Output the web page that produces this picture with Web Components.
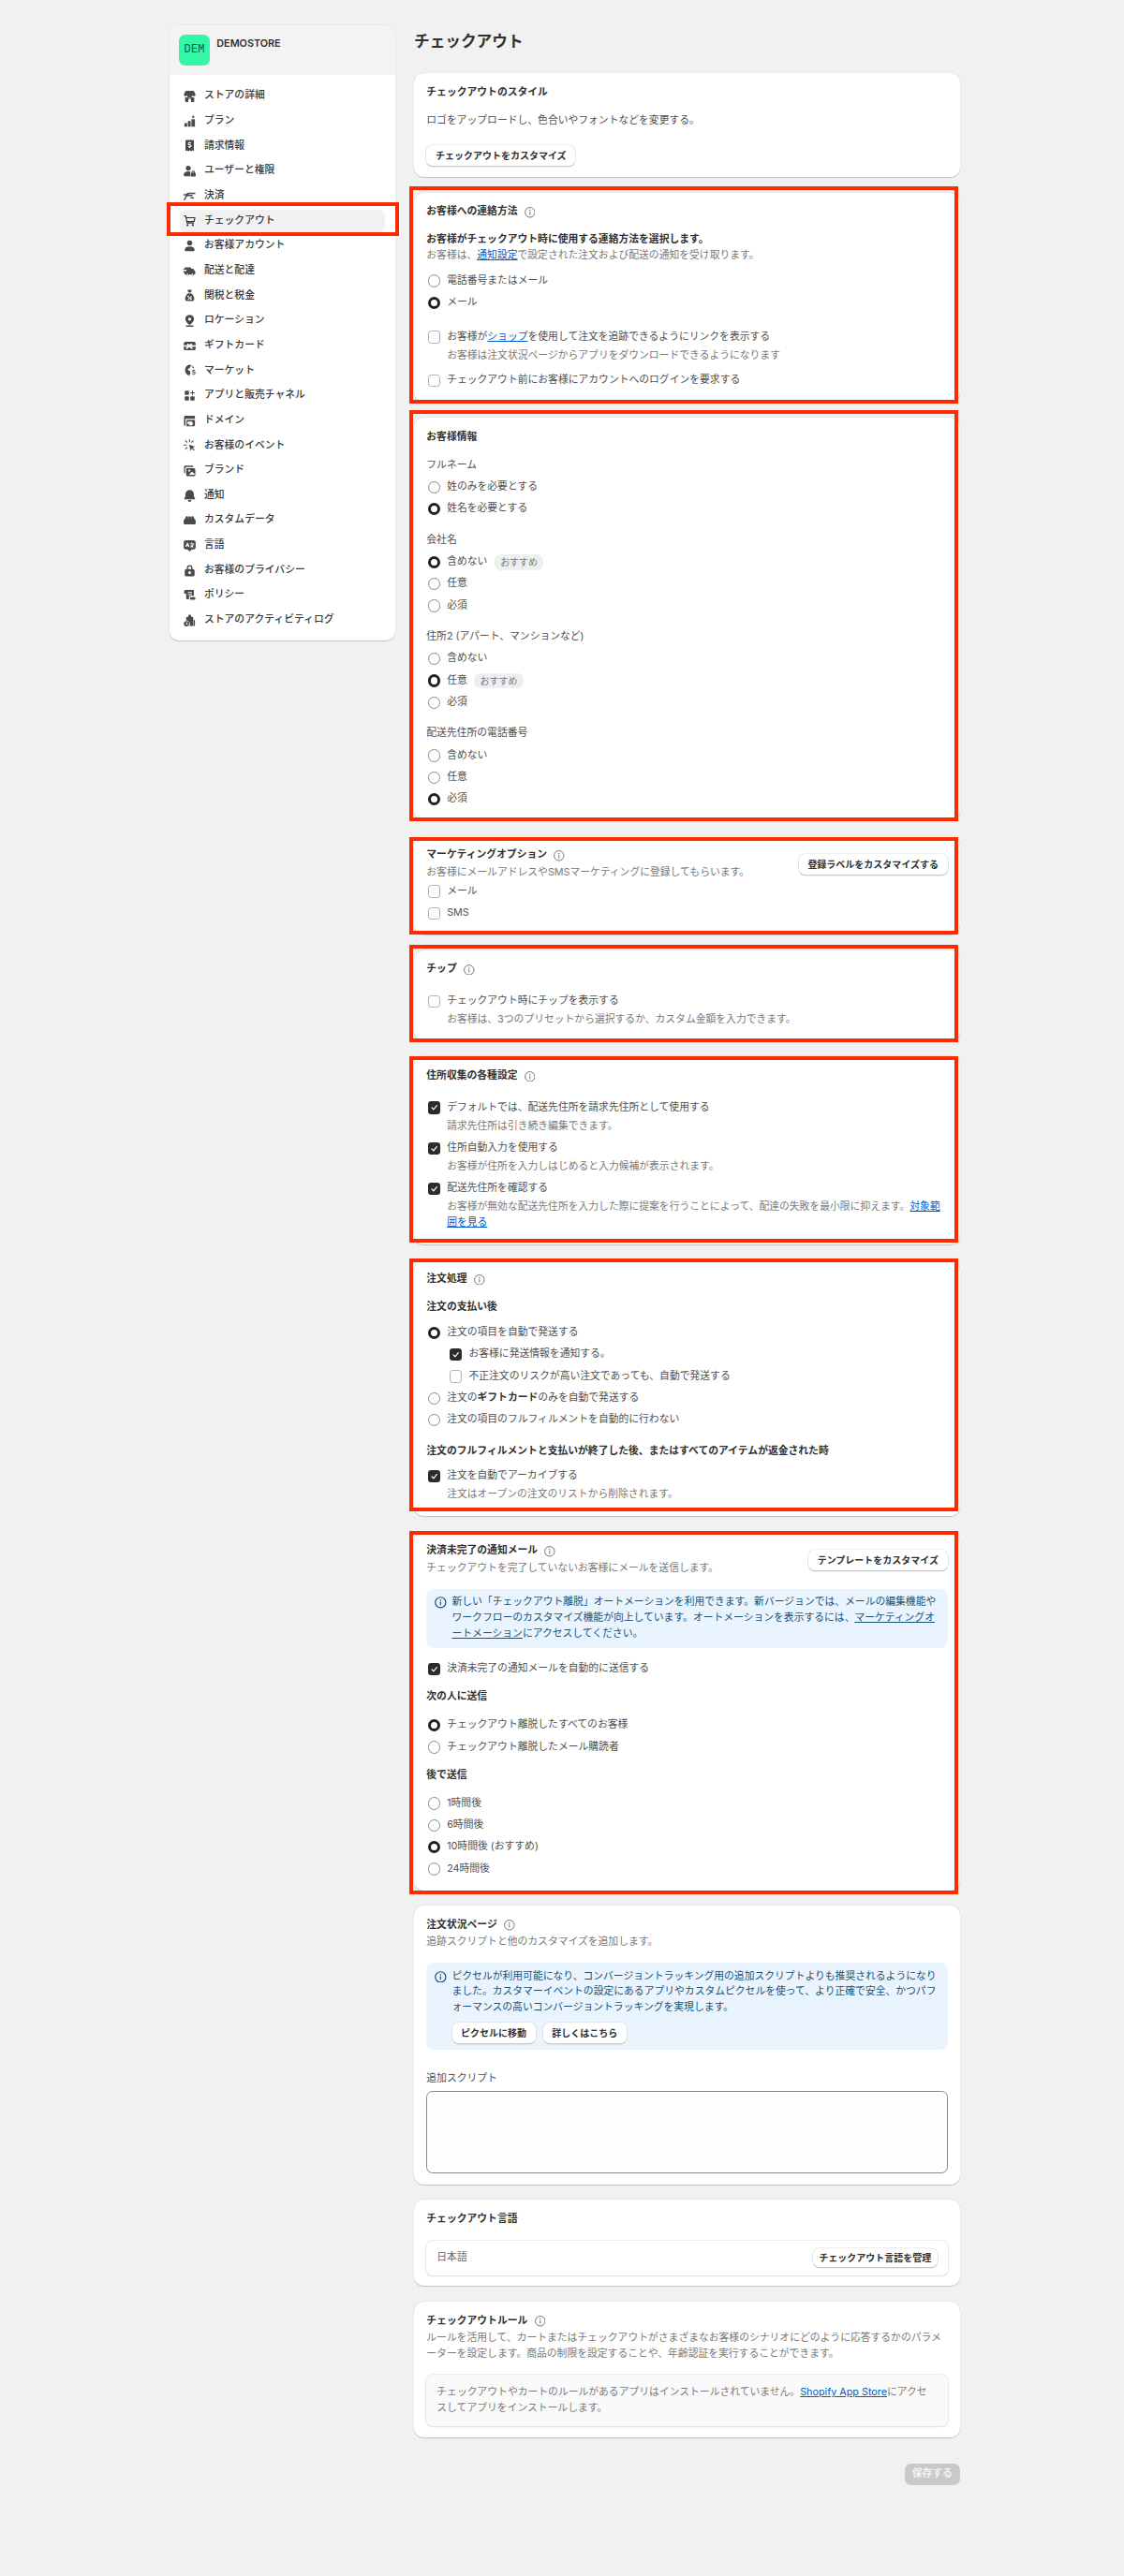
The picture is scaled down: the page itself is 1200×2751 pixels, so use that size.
<!DOCTYPE html>
<html lang="ja">
<head>
<meta charset="utf-8">
<title>チェックアウト</title>
<style>
html,body{margin:0;padding:0;background:#f1f1f1}
body{font-family:Inter,"Noto Sans CJK JP",sans-serif;font-size:10.8px;line-height:16.67px;color:#303030;overflow:hidden}
a{color:#005bd3;text-decoration:underline}
.g2{margin-top:1.7px}.g3{margin-top:3.33px}.g7{margin-top:6.67px}.g10{margin-top:10px}.g13{margin-top:13.33px}.g14{margin-top:14px}.g17{margin-top:16.67px}.g20{margin-top:20px}.g23{margin-top:23.3px}
</style>
</head>
<body>
<s-app>
  <s-sidebar slot="side">
    <s-nav icon="store">ストアの詳細</s-nav>
    <s-nav icon="plan">プラン</s-nav>
    <s-nav icon="bill">請求情報</s-nav>
    <s-nav icon="users">ユーザーと権限</s-nav>
    <s-nav icon="pay">決済</s-nav>
    <s-nav icon="cart" selected>チェックアウト</s-nav>
    <s-nav icon="person">お客様アカウント</s-nav>
    <s-nav icon="truck">配送と配達</s-nav>
    <s-nav icon="bag">関税と税金</s-nav>
    <s-nav icon="pin">ロケーション</s-nav>
    <s-nav icon="gift">ギフトカード</s-nav>
    <s-nav icon="globe">マーケット</s-nav>
    <s-nav icon="apps">アプリと販売チャネル</s-nav>
    <s-nav icon="domain">ドメイン</s-nav>
    <s-nav icon="click">お客様のイベント</s-nav>
    <s-nav icon="brand">ブランド</s-nav>
    <s-nav icon="bell">通知</s-nav>
    <s-nav icon="data">カスタムデータ</s-nav>
    <s-nav icon="lang">言語</s-nav>
    <s-nav icon="lock">お客様のプライバシー</s-nav>
    <s-nav icon="policy">ポリシー</s-nav>
    <s-nav icon="log">ストアのアクティビティログ</s-nav>
  </s-sidebar>

  <s-page heading="チェックアウト">
    <s-card style="padding-bottom:11.8px">
      <s-text kind="title">チェックアウトのスタイル</s-text>
      <s-text kind="label" class="g13">ロゴをアップロードし、色合いやフォントなどを変更する。</s-text>
      <s-btn style="margin-top:17.7px">チェックアウトをカスタマイズ</s-btn>
    </s-card>

    <s-card red style="--rt:7px;--rb:1.2px">
      <s-text kind="title" info>お客様への連絡方法</s-text>
      <s-text kind="strong" class="g13">お客様がチェックアウト時に使用する連絡方法を選択します。</s-text>
      <s-text kind="sub">お客様は、<a>通知設定</a>で設定された注文および配送の通知を受け取ります。</s-text>
      <s-radio class="g10">電話番号またはメール</s-radio>
      <s-radio class="g7" checked>メール</s-radio>
      <s-check class="g20">お客様が<a>ショップ</a>を使用して注文を追跡できるようにリンクを表示する<span slot="desc">お客様は注文状況ページからアプリをダウンロードできるようになります</span></s-check>
      <s-check class="g10">チェックアウト前にお客様にアカウントへのログインを要求する</s-check>
    </s-card>

    <s-card red style="--rt:8.2px;--rb:1px">
      <s-text kind="title">お客様情報</s-text>
      <s-text kind="label" class="g13">フルネーム</s-text>
      <s-radio class="g7">姓のみを必要とする</s-radio>
      <s-radio class="g7" checked>姓名を必要とする</s-radio>
      <s-text kind="label" class="g17">会社名</s-text>
      <s-radio class="g7" checked>含めない<s-badge slot="after">おすすめ</s-badge></s-radio>
      <s-radio class="g7">任意</s-radio>
      <s-radio class="g7">必須</s-radio>
      <s-text kind="label" class="g17">住所2 (アパート、マンションなど)</s-text>
      <s-radio class="g7">含めない</s-radio>
      <s-radio class="g7" checked>任意<s-badge slot="after">おすすめ</s-badge></s-radio>
      <s-radio class="g7">必須</s-radio>
      <s-text kind="label" class="g17">配送先住所の電話番号</s-text>
      <s-radio class="g7">含めない</s-radio>
      <s-radio class="g7">任意</s-radio>
      <s-radio class="g7" checked>必須</s-radio>
    </s-card>

    <s-card red style="--rt:-.9px;--rb:-.3px">
      <s-head>
        <s-text kind="title" info>マーケティングオプション</s-text>
        <s-text kind="sub" class="g2">お客様にメールアドレスやSMSマーケティングに登録してもらいます。</s-text>
        <s-btn slot="action">登録ラベルをカスタマイズする</s-btn>
      </s-head>
      <s-check class="g3">メール</s-check>
      <s-check class="g7">SMS</s-check>
    </s-card>

    <s-card red style="--rt:6px;--rb:.8px">
      <s-text kind="title" info>チップ</s-text>
      <s-check style="margin-top:17px">チェックアウト時にチップを表示する<span slot="desc">お客様は、3つのプリセットから選択するか、カスタム金額を入力できます。</span></s-check>
    </s-card>

    <s-card red style="--rt:.9px;--rb:-2px">
      <s-text kind="title" info>住所収集の各種設定</s-text>
      <s-check style="margin-top:17px" checked>デフォルトでは、配送先住所を請求先住所として使用する<span slot="desc">請求先住所は引き続き編集できます。</span></s-check>
      <s-check class="g7" checked>住所自動入力を使用する<span slot="desc">お客様が住所を入力しはじめると入力候補が表示されます。</span></s-check>
      <s-check class="g7" checked>配送先住所を確認する<span slot="desc">お客様が無効な配送先住所を入力した際に提案を行うことによって、配達の失敗を最小限に抑えます。<a>対象範囲を見る</a></span></s-check>
    </s-card>

    <s-card red style="--rt:1.4px;--rb:-5px">
      <s-text kind="title" info>注文処理</s-text>
      <s-text kind="strong" class="g13">注文の支払い後</s-text>
      <s-radio class="g10" checked>注文の項目を自動で発送する</s-radio>
      <s-check class="g7" style="margin-left:23.33px" checked>お客様に発送情報を通知する。</s-check>
      <s-check class="g7" style="margin-left:23.33px">不正注文のリスクが高い注文であっても、自動で発送する</s-check>
      <s-radio class="g7">注文の<b>ギフトカード</b>のみを自動で発送する</s-radio>
      <s-radio class="g7">注文の項目のフルフィルメントを自動的に行わない</s-radio>
      <s-text kind="strong" class="g17">注文のフルフィルメントと支払いが終了した後、またはすべてのアイテムが返金された時</s-text>
      <s-check class="g10" checked>注文を自動でアーカイブする<span slot="desc">注文はオープンの注文のリストから削除されます。</span></s-check>
    </s-card>

    <s-card red style="--rt:.7px;--rb:4.9px">
      <s-head>
        <s-text kind="title" info>決済未完了の通知メール</s-text>
        <s-text kind="sub" class="g2">チェックアウトを完了していないお客様にメールを送信します。</s-text>
        <s-btn slot="action">テンプレートをカスタマイズ</s-btn>
      </s-head>
      <s-banner class="g13">新しい「チェックアウト離脱」オートメーションを利用できます。新バージョンでは、メールの編集機能やワークフローのカスタマイズ機能が向上しています。オートメーションを表示するには、<a style="color:inherit">マーケティングオートメーション</a>にアクセスしてください。</s-banner>
      <s-check class="g14" checked>決済未完了の通知メールを自動的に送信する</s-check>
      <s-text kind="strong" class="g13">次の人に送信</s-text>
      <s-radio class="g13" checked>チェックアウト離脱したすべてのお客様</s-radio>
      <s-radio class="g7">チェックアウト離脱したメール購読者</s-radio>
      <s-text kind="strong" class="g13">後で送信</s-text>
      <s-radio class="g13">1時間後</s-radio>
      <s-radio class="g7">6時間後</s-radio>
      <s-radio class="g7" checked>10時間後 (おすすめ)</s-radio>
      <s-radio class="g7">24時間後</s-radio>
    </s-card>

    <s-card style="padding-bottom:11.7px">
      <s-text kind="title" info>注文状況ページ</s-text>
      <s-text kind="sub" class="g2">追跡スクリプトと他のカスタマイズを追加します。</s-text>
      <s-banner class="g13">ピクセルが利用可能になり、コンバージョントラッキング用の追加スクリプトよりも推奨されるようになりました。カスタマーイベントの設定にあるアプリやカスタムピクセルを使って、より正確で安全、かつパフォーマンスの高いコンバージョントラッキングを実現します。<s-btn slot="actions">ピクセルに移動</s-btn><s-btn slot="actions">詳しくはこちら</s-btn></s-banner>
      <s-text kind="label" class="g23">追加スクリプト</s-text>
      <s-area style="margin-top:3.7px"></s-area>
    </s-card>

    <s-card style="padding-bottom:11.7px">
      <s-text kind="title">チェックアウト言語</s-text>
      <s-box class="g14" row>日本語<s-btn slot="action" slim>チェックアウト言語を管理</s-btn></s-box>
    </s-card>

    <s-card style="padding-bottom:11.7px">
      <s-text kind="title" info>チェックアウトルール</s-text>
      <s-text kind="sub" class="g2">ルールを活用して、カートまたはチェックアウトがさまざまなお客様のシナリオにどのように応答するかのパラメーターを設定します。商品の制限を設定することや、年齢認証を実行することができます。</s-text>
      <s-box class="g14" muted>チェックアウトやカートのルールがあるアプリはインストールされていません。<a>Shopify App Store</a>にアクセスしてアプリをインストールします。</s-box>
    </s-card>

    <s-save>保存する</s-save>
  </s-page>
</s-app>

<script>
const ICONS={
store:`<path fill-rule="evenodd" d="M5.5 2.5h9a2 2 0 0 1 1.8 1.1L18.4 8a2.6 2.6 0 0 1-4.9 1 3.2 3.2 0 0 1-7 0 2.6 2.6 0 0 1-4.9-1l2.1-4.4a2 2 0 0 1 1.8-1.1zM3.5 12h13v5.5a1 1 0 0 1-1 1h-11a1 1 0 0 1-1-1V12zm6.5 1.5a2 2 0 0 0-2 2v3h4v-3a2 2 0 0 0-2-2z"/>`,
plan:`<path d="M2.5 13.5a1 1 0 0 1 1-1h3v5h-4v-4zM7.5 10.5a1 1 0 0 1 1-1h3v8h-4v-7zM12.5 8a1 1 0 0 1 1-1h3a1 1 0 0 1 1 1v9.5h-5V8z"/><circle cx="15" cy="3.5" r="1.6"/>`,
bill:`<path fill-rule="evenodd" d="M5.5 2h9A1.5 1.5 0 0 1 16 3.500V18l-2-1.200L12 18l-2-1.200L8 18l-2-1.200L4 18V3.500A1.500 1.500 0 0 1 5.500 2zM10 4.500a.8.800 0 0 0-.8.800 2.300 2.300 0 0 0-1.700 2.200c0 1.600 1.400 2 2.500 2.300.8.200 1 .4 1 .7 0 .4-.4.600-1 .6-.6 0-1.300-.2-1.800-.6l-.8 1.200c.5.400 1 .6 1.800.8a.8.800 0 0 0 1.600 0 2.300 2.300 0 0 0 1.700-2.100c0-1.700-1.400-2.100-2.500-2.400-.8-.2-1-.4-1-.7s.4-.5.9-.5 1.100.2 1.500.5l.8-1.200a4 4 0 0 0-1.400-.7.800.800 0 0 0-.8-.8z"/>`,
users:`<circle cx="8" cy="6" r="3.500"/><path d="M1.500 15.500c0-3 2.800-4.800 6.500-4.800 1 0 1.900.1 2.700.4v6.400H3a1.500 1.500 0 0 1-1.500-1.500v-.5z"/><path fill-rule="evenodd" d="M15 9.500a2.500 2.500 0 0 1 2.500 2.500v.5h.2a.8.800 0 0 1 .8.800v3.900a.8.800 0 0 1-.8.800h-5.400a.8.800 0 0 1-.8-.8v-3.900a.8.800 0 0 1 .8-.8h.2V12A2.500 2.500 0 0 1 15 9.500zm0 1.500a1 1 0 0 0-1 1v.5h2V12a1 1 0 0 0-1-1z"/>`,
pay:`<path d="M5 6.500C7 5 9 4.800 11 5h7v2h-7.500C9 7 8 7.500 7.500 8H14v2H8c-2 0-3 1.500-3.500 4l-2 2-1.500-1 2-2c.300-2 1-3.300 2-4H1.500V7H5z"/><path d="M11 11.500h5v1.800h-5z"/>`,
cart:`<g fill="none" stroke="#303030" stroke-width="1.500" stroke-linecap="round" stroke-linejoin="round"><path d="M2.500 3.500h1.200a1 1 0 0 1 1 .8l1.500 9.200h9.300"/><path d="M5 6h12.500l-1.300 5.500H6"/></g><circle cx="7" cy="16.500" r="1.400" fill="#303030"/><circle cx="14.500" cy="16.500" r="1.400" fill="#303030"/>`,
person:`<circle cx="10" cy="6" r="3.700"/><path d="M3 15.500c0-3 3-4.500 7-4.500s7 1.500 7 4.500v.5a1.500 1.500 0 0 1-1.500 1.500h-11A1.500 1.500 0 0 1 3 16v-.5z"/>`,
truck:`<path fill-rule="evenodd" d="M4.500 4.500h6.500a1 1 0 0 1 1 1v1h2.500a1 1 0 0 1 .9.500l2.400 3.500c.1.200.2.400.2.600v2.400a1 1 0 0 1-1 1h-.6a2.500 2.500 0 0 1-4.800 0H9.400a2.500 2.500 0 0 1-4.800 0H2.500v-3H1v-1.500h4.500V8H1V6.500h2.500a1 1 0 0 1 1-2zM7 13.500a1.200 1.200 0 1 0 0 2.400 1.200 1.200 0 0 0 0-2.400zm7 0a1.200 1.200 0 1 0 0 2.400 1.200 1.200 0 0 0 0-2.400z"/>`,
bag:`<path fill-rule="evenodd" d="M7 2h6l-1 3.500H8L7 2zM8 7h4c2.500 1.500 4.500 4.500 4.500 7.500 0 2.300-1.500 3.500-3.500 3.500H7c-2 0-3.500-1.200-3.500-3.500C3.500 11.500 5.500 8.500 8 7zm4.200 3.500-5 5 1 1 5-5-1-1zM8 10.300a1.200 1.200 0 1 0 0 2.400 1.200 1.200 0 0 0 0-2.400zm4 3.500a1.200 1.200 0 1 0 0 2.400 1.200 1.200 0 0 0 0-2.400z"/>`,
pin:`<path fill-rule="evenodd" d="M10 1.500a6.200 6.200 0 0 1 6.200 6.200c0 2.900-2.300 5.200-5.200 8h-2c-2.900-2.800-5.200-5.100-5.200-8A6.200 6.200 0 0 1 10 1.500zm0 4a2.200 2.200 0 1 0 0 4.400 2.200 2.200 0 0 0 0-4.400z"/><rect x="4.500" y="16.500" width="11" height="2" rx="1"/>`,
gift:`<path fill-rule="evenodd" d="M4 4h12a2.500 2.500 0 0 1 2.500 2.500v7A2.500 2.500 0 0 1 16 16H4a2.500 2.500 0 0 1-2.500-2.500v-7A2.500 2.500 0 0 1 4 4zm3.500 2.500c-1.300 0-1.800 1.500-1 2.500H1.500v2h5l-2 2 1.500 1.500 3-3 1 .1 3 2.900 1.500-1.500-2-2h6V9h-5c.8-1 .3-2.500-1-2.500-1.200 0-2 .8-2.500 1.800-.5-1-1.300-1.800-2.500-1.800z"/>`,
globe:`<path d="M9.500 2A8 8 0 0 1 13 2.800l-2 1.700-1 2.500-2.500.5L8 10l2.500 1 .5 3-1.500 3.500A8 8 0 0 1 9.500 2z"/><path d="M15.300 9.500v.7c1 .2 1.800.8 2 1.500l-1.200.5c-.2-.4-.7-.8-1.400-.8-.6 0-1 .3-1 .6 0 .4.500.6 1.200.8 1 .2 2.500.6 2.500 2 0 1-.8 1.700-2 1.900v.8h-1.300v-.8c-1-.2-1.900-.8-2.200-1.700l1.200-.5c.3.600.9 1 1.700 1 .7 0 1.200-.3 1.200-.7 0-.4-.5-.6-1.200-.8-1-.2-2.400-.6-2.400-2 0-1 .8-1.600 1.800-1.800v-.7z" transform="translate(1 -1)"/><path d="M13.500 3.500a8 8 0 0 1 3 3l-1.500.5-1.500-1.500z"/>`,
apps:`<rect x="3" y="3" width="6" height="6" rx="1.200"/><rect x="3" y="11" width="6" height="6" rx="1.200"/><rect x="11" y="11" width="6" height="6" rx="1.200"/><path d="M13.300 3h1.400v2.300H17v1.400h-2.300V9h-1.400V6.700H11V5.300h2.300z"/>`,
domain:`<path fill-rule="evenodd" d="M4 2.500h12A1.500 1.500 0 0 1 17.500 4v3H4v10H3.500A1.500 1.500 0 0 1 2 15.500V4.500a2 2 0 0 1 2-2z"/><path fill-rule="evenodd" d="M5.500 8.500h12v7a2 2 0 0 1-2 2h-10v-9zm6 2a3 3 0 1 0 0 6 3 3 0 0 0 0-6zm-4.500 0v4h2v-4H7z" /><rect x="5.500" y="5" width="1" height="1"/>`,
click:`<path d="m9 9 8.500 3-3.300 1.500 3 3-1.200 1.200-3-3L11.500 18z"/><path d="M9.200 1.500h1.400v4.200H9.200zM1.500 9h4.200v1.400H1.500zM3.300 3.700l1-1 2.900 2.900-1 1zM3.300 15.300l2.900-2.900 1 1-2.900 2.900zM12 5.600l2.900-2.900 1 1L13 6.600z"/>`,
brand:`<path fill-rule="evenodd" d="M4 3h9.500A1.500 1.500 0 0 1 15 4.500V5H6a2.500 2.500 0 0 0-2.500 2.500V14A1.500 1.500 0 0 1 2 12.500V5a2 2 0 0 1 2-2z"/><path fill-rule="evenodd" d="M6.500 6.500H16A2 2 0 0 1 18 8.500V16a2 2 0 0 1-2 2H7a2 2 0 0 1-2-2V8a1.500 1.500 0 0 1 1.500-1.500zm3 2a1.500 1.500 0 1 0 0 3 1.500 1.500 0 0 0 0-3zm3.500 3-4 4.500h8v-1.500l-4-3z"/>`,
bell:`<path d="M10 1.500a6 6 0 0 1 6 6v3.300l1.600 2.500c.4.700-.1 1.700-1 1.700H3.400c-.9 0-1.400-1-1-1.700L4 10.800V7.500a6 6 0 0 1 6-6z"/><path d="M7.500 16h5a2.500 2.500 0 0 1-5 0z"/>`,
data:`<path d="M3 8.500a2 2 0 0 1 3.500-1.300A2.500 2.500 0 0 1 8 6.400V8h4V6.400c.6 0 1.100.3 1.500.8A2 2 0 0 1 17 8.500c.9.300 1.500 1.100 1.500 2v4a1.500 1.500 0 0 1-1.500 1.500H3a1.500 1.500 0 0 1-1.500-1.500v-4c0-.9.600-1.700 1.500-2z"/><circle cx="6" cy="6" r="1.800"/><circle cx="14" cy="6" r="1.800"/><circle cx="10" cy="6.300" r="2"/>`,
lang:`<path fill-rule="evenodd" d="M4.500 2.500h11a3 3 0 0 1 3 3v7a3 3 0 0 1-3 3h-2.500L10 18.500 7 15.500H4.500a3 3 0 0 1-3-3v-7a3 3 0 0 1 3-3zM6.300 6 3.800 12h1.500l.4-1.100h2.100l.4 1.100h1.500L7.500 6H6.300zm.4 2-.5 1.600h1.100L6.700 8zm5.500-2v1.200h-1.700v1.200h3.900c-.3.700-.7 1.300-1.300 1.900-.4-.3-.7-.7-1-1l-1 .8c.3.400.7.800 1 1.100-.5.300-1 .6-1.500.8l.6 1.100c.7-.3 1.300-.6 1.900-1.100.5.400 1.200.8 1.900 1.100l.6-1.100c-.6-.2-1.100-.5-1.500-.8.8-.8 1.300-1.700 1.600-2.800h.8V7.200h-2.800V6h-1.500z"/>`,
lock:`<path fill-rule="evenodd" d="M10 2a4 4 0 0 1 4 4v1.500h.5A2.500 2.500 0 0 1 17 10v5.500a2.500 2.500 0 0 1-2.500 2.500h-9A2.500 2.500 0 0 1 3 15.500V10a2.500 2.500 0 0 1 2.500-2.500H6V6a4 4 0 0 1 4-4zm0 1.800A2.200 2.200 0 0 0 7.800 6v1.500h4.400V6A2.200 2.200 0 0 0 10 3.800zM10 10.500a2 2 0 1 0 0 4 2 2 0 0 0 0-4z"/>`,
policy:`<path fill-rule="evenodd" d="M4 2.500h10.500A1.500 1.500 0 0 1 16 4v7h-5a2 2 0 0 0-2 2v3H6.500A1.500 1.500 0 0 1 5 14.500V8H3.500A1.500 1.500 0 0 1 2 6.500v-2a2 2 0 0 1 2-2zM7.500 5.500V7h6V5.500h-6zm0 3V10h6V8.500h-6z"/><rect x="10.500" y="13" width="7.500" height="3.500" rx="1"/>`,
log:`<path fill-rule="evenodd" d="M10 1.500a2 2 0 0 1 2 2V5h1.500a1.500 1.500 0 0 1 1.500 1.500V18H9.900A5.500 5.500 0 0 0 5 10.100V6.500A1.500 1.500 0 0 1 6.500 5H8V3.500a2 2 0 0 1 2-2z"/><path d="M15.500 8.500 17.500 10v8h-2zM5.500 11a3.800 3.800 0 1 1 0 7.600 3.800 3.800 0 0 1 0-7.600zm-.6 1.500v2.800l2 1.100.6-1-1.300-.8v-2.100z" fill-rule="evenodd"/>`
};
function def(name,css,html,init){
  customElements.define(name,class extends HTMLElement{
    constructor(){super();const r=this.attachShadow({mode:'open'});r.innerHTML=`<style>${css}</style>${html}`;}
    connectedCallback(){if(init)init(this,this.shadowRoot);}
  });
}
def('s-app',`:host{display:flex;box-sizing:border-box;height:2751px;padding:27px 0 0 181px;gap:20px;align-items:flex-start}`,`<slot name="side"></slot><slot></slot>`);
def('s-sidebar',`:host{display:block;width:241px;background:#fff;border-radius:10px;box-shadow:0 .8px 1px rgba(0,0,0,.18),0 0 0 .5px rgba(0,0,0,.04);overflow:visible}
.h{display:flex;gap:7px;height:53px;box-sizing:border-box;padding:9.500px 10px 0;background:#f3f3f3;border-radius:10px 10px 0 0}
.a{width:33.300px;height:33.300px;border-radius:6.670px;background:#33f7a6;color:#125c55;display:flex;align-items:center;justify-content:center;font:12px/1 "Liberation Mono",monospace;letter-spacing:.2px}
.n{font-weight:600;font-size:10.800px;line-height:20px;color:#303030}
.l{display:flex;flex-direction:column;gap:3.330px;padding:11px 11px 10px}`,
`<div class="h"><div class="a">DEM</div><div class="n">DEMOSTORE</div></div><div class="l"><slot></slot></div>`);
def('s-nav',`:host{display:flex;position:relative;align-items:center;height:23.330px;gap:8.200px;padding-left:2.800px;border-radius:6.670px;color:#3a3a3a;font-size:10.800px;font-weight:500}
:host([selected]){background:#f1f1f1}
svg{width:15px;height:15px;flex:none;fill:#4a4a4a}
.r{display:none;position:absolute;top:-8px;bottom:-4px;left:-14px;right:-15px;border:4px solid #ff2a00;box-sizing:border-box}
:host([selected]) .r{display:block}`,
`<svg viewBox="0 0 20 20" aria-hidden="true"></svg><slot></slot><div class="r"></div>`,
(h,r)=>{r.querySelector('svg').innerHTML=ICONS[h.getAttribute('icon')]||'';});
def('s-page',`:host{display:flex;flex-direction:column;gap:16.670px;width:583px;padding-top:6.300px}
h1{margin:0 0 6px;font-size:16.670px;line-height:22px;font-weight:700;color:#303030}`,
`<h1></h1><slot></slot>`,(h,r)=>{r.querySelector('h1').textContent=h.getAttribute('heading');});
def('s-card',`:host{display:block;position:relative;background:#fff;border-radius:10px;padding:12.670px 13.330px 14.200px;box-shadow:0 .8px 1px rgba(0,0,0,.18),0 0 0 .5px rgba(0,0,0,.03)}
.r{display:none;position:absolute;pointer-events:none;box-sizing:border-box;border:4px solid #ff2a00;left:-5px;right:2px;top:calc(0px - var(--rt,0px));bottom:calc(0px - var(--rb,0px))}
:host([red]) .r{display:block}`,`<slot></slot><div class="r"></div>`);
const INFO=`<svg viewBox="0 0 12 12" width="11.600" height="11.600" fill="none" stroke="#616161" stroke-width=".9"><circle cx="6" cy="6" r="5.400"/><path d="M6 5.300v3.200" stroke-linecap="round"/><circle cx="6" cy="3.500" r=".6" fill="#616161" stroke="none"/></svg>`;
def('s-text',`:host{display:flex;align-items:center;gap:7.400px;font-size:10.800px;line-height:16.670px;color:#505050}
:host([kind=title]),:host([kind=strong]){font-weight:650;color:#303030}
:host([kind=sub]){display:block;color:#7a7a7a}
svg{flex:none}`,`<slot></slot><span id="i" style="display:inline-flex"></span>`,
(h,r)=>{if(h.hasAttribute('info'))r.getElementById('i').innerHTML=INFO;else r.getElementById('i').remove();});
const mark=`:host{display:flex;align-items:flex-start;gap:7.300px;font-size:10.800px;line-height:16.670px;color:#505050;padding-left:1.200px}`;
def('s-radio',mark+`
.b{flex:none;width:13.330px;height:13.330px;box-sizing:border-box;margin-top:1.670px;border-radius:50%;border:.9px solid #8a8a8a;background:#fff}
:host([checked]) .b{border:3.900px solid #1f1f1f}
.t{display:flex;align-items:center;gap:7.500px}
::slotted(b){font-weight:700;color:#303030}`,
`<div class="b"></div><div class="t"><span><slot></slot></span><slot name="after"></slot></div>`);
const CHECK=`<svg viewBox="0 0 12 12" width="13.330" height="13.330" style="display:block"><path d="m3.600 6.200 1.700 1.700 3.100-3.700" fill="none" stroke="#fff" stroke-width="1.100" stroke-linecap="round" stroke-linejoin="round"/></svg>`;
def('s-check',mark+`
.b{flex:none;width:13.330px;height:13.330px;box-sizing:border-box;margin-top:1.670px;border-radius:3.300px;border:.9px solid #b0b0b0;background:#fff;overflow:hidden}
:host([checked]) .b{border:0;background:#2b2b2b}
.d{color:#7a7a7a;margin-top:3.330px;display:none}
.d.on{display:block}
.c{min-width:0;flex:1;line-break:loose}`,
`<div class="b"></div><div class="c"><slot></slot><div class="d"><slot name="desc"></slot></div></div>`,
(h,r)=>{if(h.hasAttribute('checked'))r.querySelector('.b').innerHTML=CHECK;if(h.querySelector('[slot=desc]'))r.querySelector('.d').classList.add('on');});
def('s-btn',`:host{display:inline-flex;align-items:center;justify-content:center;width:max-content;height:22.400px;box-sizing:border-box;padding:0 9.600px;background:#fff;border-radius:6.670px;font-size:10px;line-height:1;font-weight:600;color:#303030;box-shadow:0 0 0 .6px #dcdcdc,0 1px 0 .2px #b8b8b8}
:host([slim]){height:19.400px;padding:0 6.300px}`,`<slot></slot>`);
def('s-badge',`:host{display:inline-flex;align-items:center;height:16.670px;padding:0 6.300px;background:#efefef;border-radius:6.670px;font-size:10px;color:#7a7a7a}`,`<slot></slot>`);
def('s-head',`:host{display:flex;align-items:center;justify-content:space-between;gap:10px;margin-top:0}`,`<div><slot></slot></div><slot name="action"></slot>`);
def('s-banner',`:host{display:flex;gap:5.500px;background:#eaf4ff;border-radius:8.330px;padding:6.500px 10px 7px 9px;color:#1a5275;font-size:10.800px;line-height:16.670px}
svg{flex:none;margin-top:2px;width:12.700px;height:12.700px}
.c{line-break:loose;min-width:0;flex:1}
.a{display:none;gap:8px;margin-top:7.700px}
.a.on{display:flex}
.a ::slotted(s-btn){height:21.600px}`,
`<svg viewBox="0 0 12 12" fill="none" stroke="#0b4a6f" stroke-width="1.100"><circle cx="6" cy="6" r="5.300"/><path d="M6 5.400v2.900" stroke-linecap="round"/><circle cx="6" cy="3.500" r=".7" fill="#0b4a6f" stroke="none"/></svg><div class="c"><slot></slot><div class="a"><slot name="actions"></slot></div></div>`,
(h,r)=>{if(h.querySelector('[slot=actions]'))r.querySelector('.a').classList.add('on');});
def('s-area',`:host{display:block;height:88.400px;box-sizing:border-box;background:#fdfdfd;border:1px solid #8a8a8a;border-radius:6.670px}`,``);
def('s-box',`:host{display:block;border-radius:6.670px;box-shadow:0 0 0 .8px #e6e6e6,0 .8px 0 .4px #e3e3e3;color:#666;font-size:10.800px;line-height:16.670px;box-sizing:border-box;line-break:loose}
:host([row]){display:flex;align-items:center;justify-content:space-between;height:37px;padding:0 11px}
:host([muted]){background:#fafafa;padding:11px 21px 11px 11px;height:55px;color:#7a7a7a}`,`<slot></slot><slot name="action"></slot>`);
def('s-save',`:host{display:flex;align-self:flex-end;align-items:center;justify-content:center;margin-top:11.300px;width:59.500px;height:23.300px;border-radius:6.670px;background:#c9c9c9;color:#f4f4f4;font-size:10.800px;font-weight:600}`,`<slot></slot>`);
</script>
</body>
</html>
